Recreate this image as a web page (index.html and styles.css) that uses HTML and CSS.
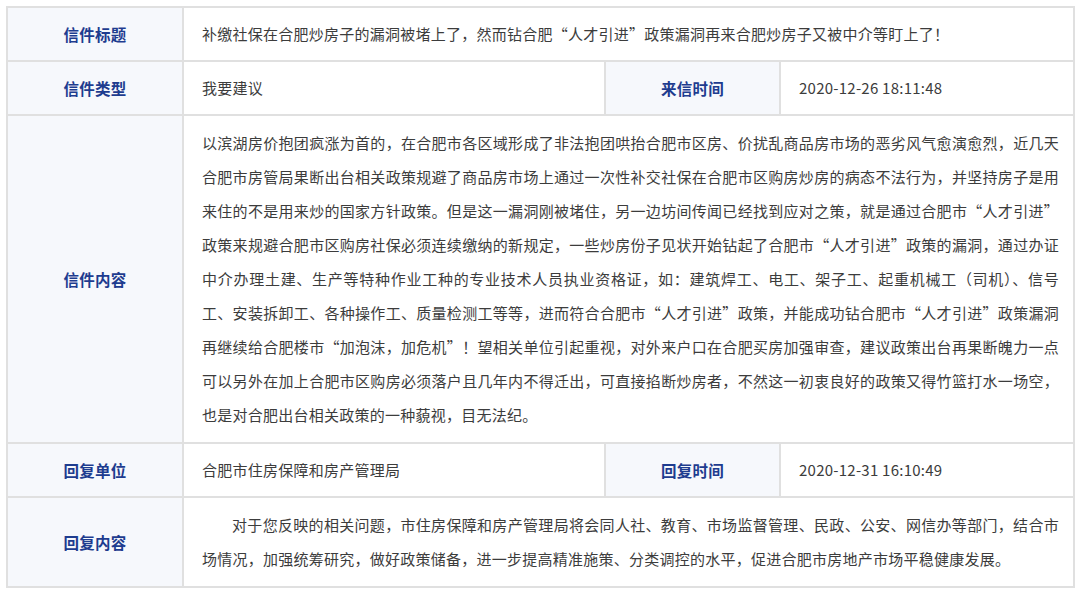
FILE: index.html
```html
<!DOCTYPE html>
<html lang="zh-CN">
<head>
<meta charset="utf-8">
<title>信件详情</title>
<link rel="stylesheet" href="styles.css">
</head>
<body>
<table class="letter">
  <colgroup>
    <col class="c-label">
    <col class="c-value">
    <col class="c-label2">
    <col class="c-value2">
  </colgroup>
  <tr class="row-single">
    <th class="label">信件标题</th>
    <td class="value" colspan="3">补缴社保在合肥炒房子的漏洞被堵上了，然而钻合肥“人才引进”政策漏洞再来合肥炒房子又被中介等盯上了！</td>
  </tr>
  <tr class="row-single">
    <th class="label">信件类型</th>
    <td class="value">我要建议</td>
    <th class="label">来信时间</th>
    <td class="value">2020-12-26 18:11:48</td>
  </tr>
  <tr>
    <th class="label">信件内容</th>
    <td class="value text" colspan="3">以滨湖房价抱团疯涨为首的，在合肥市各区域形成了非法抱团哄抬合肥市区房、价扰乱商品房市场的恶劣风气愈演愈烈，近几天合肥市房管局果断出台相关政策规避了商品房市场上通过一次性补交社保在合肥市区购房炒房的病态不法行为，并坚持房子是用来住的不是用来炒的国家方针政策。但是这一漏洞刚被堵住，另一边坊间传闻已经找到应对之策，就是通过合肥市“人才引进”政策来规避合肥市区购房社保必须连续缴纳的新规定，一些炒房份子见状开始钻起了合肥市“人才引进”政策的漏洞，通过办证中介办理土建、生产等特种作业工种的专业技术人员执业资格证，如：建筑焊工、电工、架子工、起重机械工（司机）、信号工、安装拆卸工、各种操作工、质量检测工等等，进而符合合肥市“人才引进”政策，并能成功钻合肥市“人才引进”政策漏洞再继续给合肥楼市“加泡沫，加危机”！望相关单位引起重视，对外来户口在合肥买房加强审查，建议政策出台再果断魄力一点可以另外在加上合肥市区购房必须落户且几年内不得迁出，可直接掐断炒房者，不然这一初衷良好的政策又得竹篮打水一场空，也是对合肥出台相关政策的一种藐视，目无法纪。</td>
  </tr>
  <tr class="row-single">
    <th class="label">回复单位</th>
    <td class="value">合肥市住房保障和房产管理局</td>
    <th class="label">回复时间</th>
    <td class="value">2020-12-31 16:10:49</td>
  </tr>
  <tr>
    <th class="label">回复内容</th>
    <td class="value text indent" colspan="3">对于您反映的相关问题，市住房保障和房产管理局将会同人社、教育、市场监督管理、民政、公安、网信办等部门，结合市场情况，加强统筹研究，做好政策储备，进一步提高精准施策、分类调控的水平，促进合肥市房地产市场平稳健康发展。</td>
  </tr>
</table>
</body>
</html>
```

FILE: styles.css
```css
html, body {
  margin: 0;
  padding: 0;
  background: #ffffff;
}

body {
  padding: 6px 0 0 6px;
  font-family: "Noto Sans CJK SC", "Microsoft YaHei", sans-serif;
  font-size: 15px;
  color: #3c3c3c;
}

.letter {
  border-collapse: collapse;
  table-layout: fixed;
  width: 1067px;
  border: 2px solid #e0e0e0;
}

.c-label { width: 176px; }
.c-value { width: 422px; }
.c-label2 { width: 175px; }
.c-value2 { width: 294px; }

.letter th,
.letter td {
  border: 2px solid #e0e0e0;
  padding: 10px 14px 10px 18px;
  line-height: 34px;
  vertical-align: middle;
  letter-spacing: 0.25px;
}

.letter .row-single th,
.letter .row-single td {
  padding-top: 9px;
  padding-bottom: 9px;
}

.label {
  background: #f6f8fc;
  color: #1e3c8f;
  font-weight: bold;
  text-align: center;
  font-size: 15.5px;
}

.letter th.label {
  padding-left: 10px;
  padding-right: 10px;
}

.value {
  text-align: left;
  font-weight: normal;
}

.text {
  text-align: justify;
}

.indent {
  text-indent: 2em;
}
```
